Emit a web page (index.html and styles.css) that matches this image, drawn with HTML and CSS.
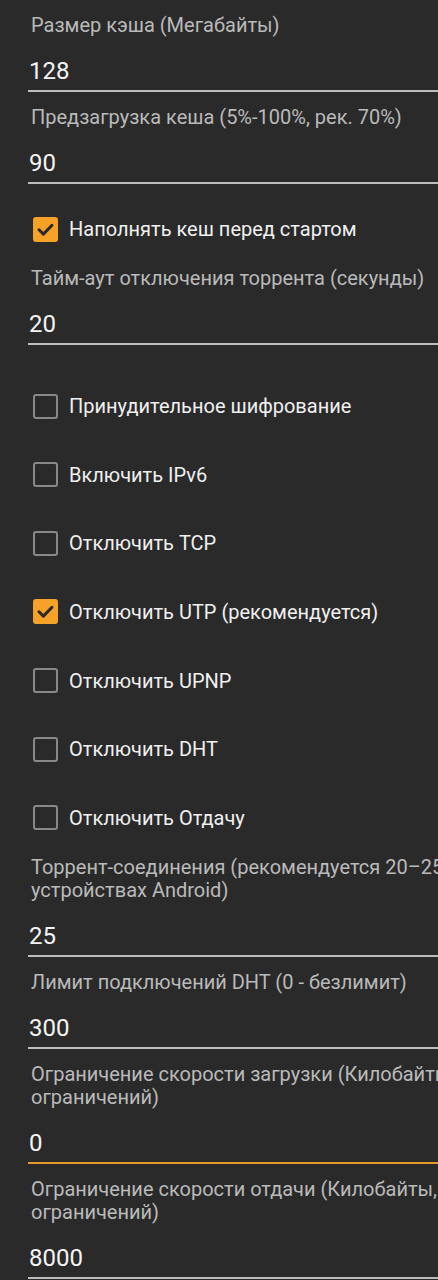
FILE: index.html
```html
<!DOCTYPE html>
<html lang="ru">
  <head>
    <meta charset="utf-8" />
    <link rel="stylesheet" href="styles.css">
  </head>
  <body>
    <main class="settings">
      <div class="field">
        <div class="field-label">Размер кэша (Мегабайты)</div>
        <div class="field-value">128</div>
      </div>
      <div class="field">
        <div class="field-label">Предзагрузка кеша (5%-100%, рек. 70%)</div>
        <div class="field-value">90</div>
      </div>

      <div class="checks checks-single">
        <label class="check">
          <span class="box checked"><svg viewBox="0 0 25 25"><path d="M6 12.8l4.4 4.3 8.6-8.8"/></svg></span>
          Наполнять кеш перед стартом
        </label>
      </div>

      <div class="field">
        <div class="field-label">Тайм-аут отключения торрента (секунды)</div>
        <div class="field-value">20</div>
      </div>

      <div class="checks checks-group">
        <label class="check"><span class="box"></span>Принудительное шифрование</label>
        <label class="check"><span class="box"></span>Включить IPv6</label>
        <label class="check"><span class="box"></span>Отключить TCP</label>
        <label class="check">
          <span class="box checked"><svg viewBox="0 0 25 25"><path d="M6 12.8l4.4 4.3 8.6-8.8"/></svg></span>
          Отключить UTP (рекомендуется)
        </label>
        <label class="check"><span class="box"></span>Отключить UPNP</label>
        <label class="check"><span class="box"></span>Отключить DHT</label>
        <label class="check"><span class="box"></span>Отключить Отдачу</label>
      </div>

      <div class="field">
        <div class="field-label">Торрент-соединения (рекомендуется 20–25 на устройствах Android)</div>
        <div class="field-value">25</div>
      </div>
      <div class="field">
        <div class="field-label">Лимит подключений DHT (0 - безлимит)</div>
        <div class="field-value">300</div>
      </div>
      <div class="field">
        <div class="field-label">Ограничение скорости загрузки (Килобайты, 0 - без ограничений)</div>
        <div class="field-value focused">0</div>
      </div>
      <div class="field">
        <div class="field-label">Ограничение скорости отдачи (Килобайты, 0 - без ограничений)</div>
        <div class="field-value">8000</div>
      </div>
    </main>
  </body>
</html>
```

FILE: styles.css
```css
html, body {
  margin: 0;
  background: #2a2a2a;
  overflow: hidden;
}

body {
  font-family: Roboto, "Noto Sans", sans-serif;
  -webkit-font-smoothing: antialiased;
}

/* the form is wider than the phone screen, its right side is cut off */
.settings {
  width: 525px;
  padding-left: 28px;
}

.field {
  padding-top: 14px;
}

.field-label {
  padding-left: 3px;
  font-size: 20px;
  line-height: 23px;
  color: #bababa;
}

.field-value {
  margin-top: 20px;
  padding-left: 1px;
  padding-bottom: 5px;
  font-size: 24px;
  line-height: 28px;
  color: #f4f4f4;
  border-bottom: 2px solid #bdbdbd;
}

.field-value.focused {
  border-bottom-color: #ea962e;
}

.checks {
  display: flex;
  flex-direction: column;
  gap: 20.67px;
}

.checks-single {
  margin-top: 21px;
}

.checks-group {
  margin-top: 37px;
}

.check {
  display: flex;
  align-items: center;
  gap: 11px;
  height: 48px;
  padding-left: 5px;
  font-size: 20px;
  color: #f0f0f0;
}

.box {
  box-sizing: border-box;
  width: 25px;
  height: 25px;
  border: 2.5px solid #888888;
  border-radius: 3px;
  flex-shrink: 0;
}

.box.checked {
  border: none;
  background: #f6a229;
}

.box svg {
  display: block;
  width: 25px;
  height: 25px;
}

.box path {
  fill: none;
  stroke: #2a2a2a;
  stroke-width: 3px;
  stroke-linecap: round;
  stroke-linejoin: round;
}
```
